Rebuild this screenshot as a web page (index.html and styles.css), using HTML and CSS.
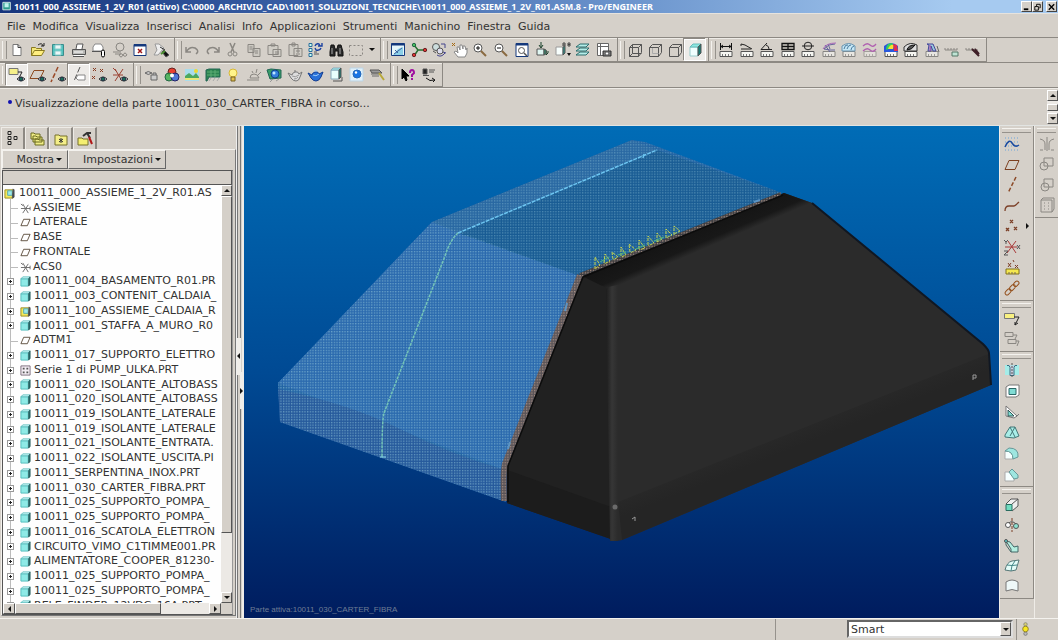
FILE: index.html
```html
<!DOCTYPE html>
<html lang="it">
<head>
<meta charset="utf-8">
<title>10011_000_ASSIEME_1_2V_R01 - Pro/ENGINEER</title>
<link rel="stylesheet" href="styles.css">
</head>
<body>
<svg class="defs" aria-hidden="true">
  <symbol id="part" viewBox="0 0 12 12"><path d="M1 3h8v8H1z" fill="#8eeae6" stroke="#5bb" /><path d="M1 3l2-2h8l-2 2z" fill="#dff" stroke="#5bb"/><path d="M9.500 3l1.500-2v8l-1.500 2z" fill="#166" stroke="#366"/></symbol>
  <symbol id="asm" viewBox="0 0 12 12"><path d="M1 2h9v9H1z" fill="#f4e95c" stroke="#998a20"/><path d="M4 3h5v5H4z" fill="#9fe9ea" stroke="#5aa"/><path d="M10 1l1 1v8l-2 1z" fill="#345"/></symbol>
  <symbol id="plane" viewBox="0 0 12 12"><path d="M4 2.500h7l-3 7H1z" stroke="#5a4a3a" fill="none"/></symbol>
  <symbol id="csys" viewBox="0 0 12 12"><path d="M1 6h10M3 1l6 10M9 2L3 11M1 1l2 2M11 4v4" stroke="#666" fill="none"/></symbol>
  <symbol id="series" viewBox="0 0 12 12"><path d="M1 1h10v10H1z" stroke="#7a6a78" fill="#f4eef4"/><path d="M3 4h2M7 4h2M3 8h2M7 8h2" stroke="#555" stroke-width="2"/></symbol>
  <symbol id="ruler" viewBox="0 0 20 20"><path d="M4 11.500h12v5H4z" fill="#f6f6f2" stroke="#555"/><path d="M6.500 14v2M9.500 14v2M12.500 14v2" stroke="#777"/></symbol>
  <symbol id="eye" viewBox="0 0 20 20"><path d="M10 14q4-4 8 0q-4 4-8 0z" fill="#dde" stroke="#333"/><circle cx="14" cy="14" r="1.800" fill="#187058" stroke="#234"/></symbol>
  <symbol id="cube" viewBox="0 0 20 20"><path d="M4.500 7.500h9v9h-9zM4.500 7.500l3-3h9l-3 3M16.500 4.500v8l-3 4"/></symbol>
</svg>

<header class="titlebar">
  <svg class="appicon" viewBox="0 0 12 12"><path d="M1 1h9v9H1z" fill="#2c9c8e" stroke="#e8f4f0"/><path d="M3 2h5v5H3z" fill="#bff3ee"/></svg>
  <h1>10011_000_ASSIEME_1_2V_R01 (attivo) C:\0000_ARCHIVIO_CAD\10011_SOLUZIONI_TECNICHE\10011_000_ASSIEME_1_2V_R01.ASM.8 - Pro/ENGINEER</h1>
  <div class="winbtns">
    <button aria-label="Riduci"><svg viewBox="0 0 10 8"><path d="M2 6.500h5" stroke="#000" stroke-width="2"/></svg></button>
    <button aria-label="Ripristina"><svg viewBox="0 0 10 8"><path d="M4 3V1h4v4H7M2 3.500h4v4H2z" stroke="#000"/></svg></button>
    <button class="close" aria-label="Chiudi"><svg viewBox="0 0 10 8"><path d="M2 1l6 6M8 1L2 7" stroke="#000" stroke-width="1.500"/></svg></button>
  </div>
</header>

<nav class="menubar">
  <button>File</button><button>Modifica</button><button>Visualizza</button><button>Inserisci</button><button>Analisi</button><button>Info</button><button>Applicazioni</button><button>Strumenti</button><button>Manichino</button><button>Finestra</button><button>Guida</button>
</nav>

<div class="toolbar">
  <div class="group g-file">
    <button aria-label="Nuovo"><svg viewBox="0 0 20 20"><path d="M6 4.500h5l3 3v8H6z" fill="#fff" stroke="#777"/><path d="M11 4.500v3h3" stroke="#444"/></svg></button>
    <button aria-label="Apri"><svg viewBox="0 0 20 20"><path d="M3.500 15.500v-8h4l1 1h5v2" fill="#f3e77a" stroke="#8a7a20"/><path d="M3.500 15.500l3-5h10l-3 5z" fill="#ffef80" stroke="#8a7a20"/><path d="M10 5q4-3 5 1M13 6h3V3" stroke="#222"/></svg></button>
    <button aria-label="Salva"><svg viewBox="0 0 20 20"><path d="M4.500 4.500h11v11h-11z" fill="#52c4be" stroke="#3a8c8c"/><path d="M7 5h6v4H7zM7 11h6v4H7z" fill="#eaf6f6" stroke="#8cc"/></svg></button>
    <button aria-label="Stampa"><svg viewBox="0 0 20 20"><path d="M7 9l1-5h6l-1 5" fill="#fff" stroke="#555"/><path d="M3.500 9.500h13v5h-13z" fill="#b9b9b6" stroke="#555"/><path d="M5 15.500h10M5 12h9" stroke="#fff"/><path d="M4 16.500h11" stroke="#555"/></svg></button>
    <button aria-label="Invia"><svg viewBox="0 0 20 20"><path d="M4 10V7l2-3h6l2 3v4H4z" fill="#fff" stroke="#888"/><path d="M3 11.500h9" stroke="#555"/><rect x="12.500" y="10" width="3" height="7" rx="1.500" fill="#fff" stroke="#000"/></svg></button>
    <button class="off" aria-label="Invia collegamento"><svg viewBox="0 0 20 20"><circle cx="10" cy="7" r="4"/><path d="M3 12h8M5 14h6M9 15q2-3 4 0t4 0q-2-4-4 0t-4 0"/></svg></button>
    <button aria-label="Chiudi finestra"><svg viewBox="0 0 20 20"><path d="M4 4.500h12v11H4z" fill="#fff" stroke="#14387c"/><path d="M4 5.500h12" stroke="#14387c" stroke-width="2"/><path d="M8 9l4 4M12 9l-4 4" stroke="#a01818" stroke-width="1.500"/></svg></button>
    <button aria-label="Elimina versioni"><svg viewBox="0 0 20 20"><path d="M4 4h4l5 4-6 7H3l3-5z" fill="#eee" stroke="#999"/><path d="M9 7l5 3" stroke="#333"/><path d="M11 12l2-2 5 5-3 2z" fill="#111"/><path d="M10 14l4-3" stroke="#4a8f30" stroke-width="2"/></svg></button>
  </div>
  <div class="group g-edit">
    <button class="off" aria-label="Annulla"><svg viewBox="0 0 20 20"><path d="M4 7v5h5M4.500 11.500Q8 6 13 8q5 3 1 6" stroke-width="1.500"/></svg></button>
    <button class="off" aria-label="Ripeti"><svg viewBox="0 0 20 20"><path d="M16 7v5h-5M15.500 11.500Q12 6 7 8q-5 3-1 6" stroke-width="1.500"/></svg></button>
    <button class="off" aria-label="Taglia"><svg viewBox="0 0 20 20"><path d="M7 3l4 9M12 3L8 12" stroke-width="1.500"/><circle cx="7" cy="14" r="2"/><circle cx="12" cy="14" r="2"/></svg></button>
    <button class="off" aria-label="Copia"><svg viewBox="0 0 20 20"><path d="M4 4.500h6v8H4zM9 8.500h7v8H9zM5.500 7h3M5.500 9h3M11 11h3M11 13h3" fill="#ccc9c2"/></svg></button>
    <button class="off" aria-label="Incolla"><svg viewBox="0 0 20 20"><path d="M4 5.500h10v9H4zM7 4h4v2H7zM9 9.500h8v7H9zM11 12h4M11 14h4" fill="#d0cdc6"/></svg></button>
    <button class="off" aria-label="Incolla speciale"><svg viewBox="0 0 20 20"><path d="M4 4.500h9v11H4zM7 3h3v3H7zM9 8.500h8v8H9zM11 11h4M11 14h1M14 14h1" fill="#d0cdc6"/></svg></button>
    <button aria-label="Rigenera"><svg viewBox="0 0 20 20"><path d="M4 3.500h3v3H4zM4 8.500h3v3H4zM4 13.500h3v3H4z" fill="#cfe" stroke="#2a6c9c"/><path d="M10 6q1-3 4-2l1 2m-2 0h4V3M16 8q-1 3-5 2l-1-2" stroke="#1a40a0" stroke-width="1.400"/><path d="M9 14h5M9 12h3" stroke="#555"/></svg></button>
    <button aria-label="Trova"><svg viewBox="0 0 20 20"><path d="M5 5h3l1 4h2l1-4h3l2 7v4h-5v-5H9v5H4v-4z" fill="#2a2a2a" stroke="#111"/><path d="M6 8v6M14 8v6" stroke="#aaa"/></svg></button>
    <button class="off" aria-label="Seleziona"><svg viewBox="0 0 20 20"><path d="M3.500 5.500h13v10h-13z" stroke-dasharray="2 2"/></svg></button>
    <button class="drop" aria-label="Opzioni di selezione"><i class="down"></i></button>
  </div>
  <div class="group g-view">
    <button aria-label="Ridisegna"><svg viewBox="0 0 20 20"><path d="M3.500 3.500h13v12h-13z" fill="#e6f6fa" stroke="#14387c"/><path d="M3.500 4.500h13" stroke="#14387c" stroke-width="2"/><path d="M10 9l5-2v8H5z" fill="#8cd0e8" stroke="none"/><path d="M6 14l8-6M7 10l3 3" stroke="#3c64a0"/></svg></button>
    <button aria-label="Centro di rotazione"><svg viewBox="0 0 20 20"><path d="M5 5l4 5-4 6M9 10h7" stroke="#267030" stroke-width="1.500"/><circle cx="5" cy="5" r="1.700" fill="#4cc060" stroke="#264"/><circle cx="5" cy="15" r="1.700" fill="#d33" stroke="#622"/><circle cx="16" cy="10" r="1.700" fill="#d33" stroke="#622"/></svg></button>
    <button aria-label="Modo orientamento"><svg viewBox="0 0 20 20"><circle cx="7" cy="7" r="3.500" fill="#cdd"/><circle cx="11" cy="11" r="3" fill="#dde"/><path d="M12 4h4v4M8 15q4 3 8-2M14 12l3 1" stroke="#44448c"/><path d="M4 11l3 2" stroke="#555"/></svg></button>
    <button aria-label="Trascina"><svg viewBox="0 0 20 20"><path d="M8 17l-4-5 2-1 2 2-1-6h2l1 3V5h2l1 4V6h2l1 4 1-2v5l-2 4z" fill="#fff" stroke="#888"/><path d="M2 3l3 3M5 3L2 6" stroke="#a76a10"/></svg></button>
    <button aria-label="Ingrandisci"><svg viewBox="0 0 20 20"><circle cx="8" cy="8" r="4" fill="#fff"/><path d="M6 8h4M8 6v4" stroke="#111"/><path d="M11 11l5 5" stroke="#8a6a40" stroke-width="2"/></svg></button>
    <button aria-label="Riduci vista"><svg viewBox="0 0 20 20"><circle cx="8" cy="8" r="4" fill="#fff"/><path d="M6 8h4" stroke="#111"/><path d="M11 11l5 5" stroke="#8a6a40" stroke-width="2"/></svg></button>
    <button aria-label="Adatta"><svg viewBox="0 0 20 20"><path d="M4 3.500h12v13H4z" fill="#fff" stroke="#14387c"/><path d="M4 4.500h12" stroke="#14387c" stroke-width="2"/><circle cx="9.500" cy="10.500" r="3"/><path d="M12 13l3 3" stroke-width="1.500"/></svg></button>
    <button aria-label="Riorienta"><svg viewBox="0 0 20 20"><path d="M5 9h7v6H5z" fill="#dff6f2"/><path d="M9 2v5M7 5l2 3 2-3M13 12h4M14 10v4M14 15l2-2" stroke="#173e28"/><path d="M12 9l2 1v4l-2 1z" fill="#2b8b6a"/></svg></button>
    <button aria-label="Viste salvate"><svg viewBox="0 0 20 20"><path d="M3 7h7v8H3z" fill="#f8fffd" stroke="#999"/><path d="M10 7l2-1v7l-2 2z" fill="#2a8f86"/><path d="M10 6V3h2v3M10 5h2M15 3v3h2V3zM15 4.500h2" stroke="#444"/><path d="M14 13h4l-2 3z" fill="#111" stroke="none"/></svg></button>
    <button aria-label="Livelli"><svg viewBox="0 0 20 20"><path d="M3 7l4-3h9l-3 3zM3 11l4-3h9l-3 3zM3 15l4-3h9l-3 3z" fill="#b5ece8" stroke="#2c6c6c"/></svg></button>
    <button aria-label="Gestione viste"><svg viewBox="0 0 20 20"><path d="M3.500 3.500h11v12h-11zM3.500 6.500h11M6.500 3.500v12" fill="#fff" stroke="#666"/><path d="M9 11h8v5H9z" fill="#777" stroke="#333"/><circle cx="13" cy="13.500" r="1.700" fill="#fff"/></svg></button>
  </div>
  <div class="group g-disp">
    <button aria-label="Wireframe"><svg viewBox="0 0 20 20"><use href="#cube"/><path d="M7.500 4.500v9h9M7.500 13.500l-3 3"/></svg></button>
    <button aria-label="Linee nascoste"><svg viewBox="0 0 20 20"><use href="#cube"/><path d="M7.500 8v5.500h6" stroke="#aaa"/></svg></button>
    <button aria-label="Nessuna linea nascosta"><svg viewBox="0 0 20 20"><use href="#cube"/></svg></button>
    <button class="on" aria-label="Ombreggiato" aria-pressed="true"><svg viewBox="0 0 20 20"><path d="M5 7h8v9H5z" fill="#f0fffe" stroke="#9cc"/><path d="M5 7l3-3h8l-3 3z" fill="#8ce8e0" stroke="#6bb"/><path d="M13 7l3-3v9l-3 3z" fill="#187c74"/></svg></button>
  </div>
  <div class="group g-meas">
    <button aria-label="Distanza"><svg viewBox="0 0 20 20"><use href="#ruler"/><path d="M4.500 3v7M15.500 3v7M5 6.500h10M7 5L5 6.500 7 8M13 5l2 1.500L13 8" stroke="#111"/></svg></button>
    <button aria-label="Lunghezza"><svg viewBox="0 0 20 20"><use href="#ruler"/><path d="M4 4l4 1 7 4M4 9h10M4 4v2" stroke="#222"/></svg></button>
    <button aria-label="Angolo"><svg viewBox="0 0 20 20"><use href="#ruler"/><path d="M10 3L4 9.500h11M9 5q3 1 3 4" stroke="#222"/></svg></button>
    <button aria-label="Area"><svg viewBox="0 0 20 20"><use href="#ruler"/><path d="M4 3.500h12v6H4zM10 3v7M4 6.500h12" stroke="#111" stroke-width="1.300"/></svg></button>
    <button aria-label="Diametro"><svg viewBox="0 0 20 20"><use href="#ruler"/><circle cx="10" cy="6" r="3.800" stroke="#222"/><path d="M4 6h12" stroke="#222"/></svg></button>
    <button aria-label="Curvatura"><svg viewBox="0 0 20 20"><use href="#ruler" opacity=".6"/><path d="M16 4l-6 1-5 4 6 1 5 0M6 5l5 7M9 4l2 5" stroke="#64649c"/><path d="M4 9q3-6 13-6" stroke="#a864b8"/></svg></button>
    <button aria-label="Sezioni"><svg viewBox="0 0 20 20"><use href="#ruler" opacity=".6"/><path d="M3 11V6q7-5 13 0v5z" fill="#c6e6f4" stroke="#6a94b0"/><path d="M5 9q1-5 4-4M8 9q1-4 4-4M12 10q0-3 3-4" stroke="#4a7ca0"/></svg></button>
    <button aria-label="Offset"><svg viewBox="0 0 20 20"><use href="#ruler" opacity=".4"/><path d="M3 6q4-4 7-1t6-1M3 11q4-4 7-1t6-1" stroke="#b060b0" stroke-width="1.300"/></svg></button>
    <button aria-label="Curvatura ombreggiata"><svg viewBox="0 0 20 20"><use href="#ruler"/><g stroke="none"><path d="M3 12V6q7-6 14 0v6z" fill="#2a58dc"/><path d="M5 10q0-7 6-7l2 4z" fill="#30d060"/><path d="M7 9q2-5 6-4l-1 4z" fill="#f6e030"/><path d="M12 4l4 1 1 6h-4z" fill="#e03050"/></g></svg></button>
    <button aria-label="Riflessione"><svg viewBox="0 0 20 20"><use href="#ruler"/><path d="M3 11V7q6-6 13-2v6z" fill="#ddd" stroke="#333"/><path d="M6 10q1-5 8-5-3 5-8 5z" fill="#555" stroke="#111"/></svg></button>
    <button aria-label="Sformo"><svg viewBox="0 0 20 20"><use href="#ruler" opacity=".6"/><path d="M5 4h6l3 7h-3l-2-5v5H6l1-6z" fill="#9cd" stroke="#449"/><path d="M8 5v6" stroke="#b4a"/><path d="M15 6l2 6" stroke="#666"/></svg></button>
    <button class="off" aria-label="Nascondi analisi"><svg viewBox="0 0 20 20"><path d="M3 10h12M3 8v2M6 8v2M9 8v2M12 8v2M15 8v2"/><path d="M10 12h6v4h-6z" fill="#bfe4d4" stroke="#576"/></svg></button>
    <button class="off" aria-label="Elimina analisi"><svg viewBox="0 0 20 20"><path d="M3 10h12M3 8v2M6 8v2M9 8v2M12 8v2"/><path d="M9 9l7 7M12 9l4 5" stroke="#402028" stroke-width="2"/></svg></button>
  </div>
</div>

<div class="toolbar">
  <div class="group g-datum">
    <button class="on" aria-label="Annotazioni"><svg viewBox="0 0 20 20"><path d="M2 3.500h9v6H2z" fill="#f6f08a" stroke="#777"/><path d="M11 7h4l-3 6" stroke="#222"/><use href="#eye"/></svg></button>
    <button aria-label="Piani di riferimento"><svg viewBox="0 0 20 20"><path d="M6 5.500h10l-4 8H2z" stroke="#8c4a20"/><use href="#eye"/></svg></button>
    <button aria-label="Assi di riferimento"><svg viewBox="0 0 20 20"><path d="M10 2L3 17" stroke="#9a4a28" stroke-dasharray="5 2" stroke-width="1.500"/><use href="#eye"/></svg></button>
    <button class="on" aria-label="Tag assi"><svg viewBox="0 0 20 20"><path d="M11 2L5 16" stroke="#555" stroke-dasharray="6 2"/><path d="M9 10h7v5H9l-2-2z" fill="#fff" stroke="#888"/></svg></button>
    <button aria-label="Punti di riferimento"><svg viewBox="0 0 20 20"><path d="M4 3l3 3M7 3L4 6M11 4l3 3M14 4l-3 3M3 11l3 3M6 11l-3 3" stroke="#883c20"/><use href="#eye"/></svg></button>
    <button aria-label="Sistemi di coordinate"><svg viewBox="0 0 20 20"><path d="M3 10h10M5 4l7 12M13 4L5 16M3 3l3 3" stroke="#9a4030"/><use href="#eye"/></svg></button>
  </div>
  <div class="group g-render">
    <button class="off" aria-label="Vista precedente"><svg viewBox="0 0 20 20"><path d="M4 8q3-3 7 0-4 3-7 0M10 10h6v5h-6zM12 10V8h3v2" fill="#ccc" stroke="#666"/></svg></button>
    <button aria-label="Colori e aspetto"><svg viewBox="0 0 20 20"><circle cx="10" cy="7" r="4" fill="#e84030" stroke="#622"/><circle cx="7" cy="12" r="4" fill="#40b050" fill-opacity=".85" stroke="#264"/><circle cx="13" cy="12" r="4" fill="#3868d8" fill-opacity=".85" stroke="#226"/><circle cx="10" cy="10.500" r="2" fill="#fff" stroke="none"/></svg></button>
    <button aria-label="Scena"><svg viewBox="0 0 20 20"><g stroke="none"><path d="M3 4h14v12H3z" fill="#a8dcec"/><path d="M3 11l4-3 4 3 3-3 3 4v2H3z" fill="#4ca860"/><circle cx="14" cy="6" r="2" fill="#f0d830"/></g><path d="M3 14h14" stroke="#e8e878" stroke-width="2"/></svg></button>
    <button aria-label="Stanza"><svg viewBox="0 0 20 20"><path d="M3 5l3-1h11v8H6l-2 4H3z" fill="#2c8450" stroke="#265"/><path d="M4 7h12M4 10h12M8 5v7M12 5v7" stroke="#5cac74"/><path d="M6 16l2-3M10 16l2-3M14 16l2-3" stroke="#aaa"/></svg></button>
    <button aria-label="Luci"><svg viewBox="0 0 20 20"><circle cx="10" cy="8" r="4" fill="#fff48a" stroke="#d8b838"/><path d="M8 12h4v4H8z" fill="#e0c050" stroke="#776020"/></svg></button>
    <button class="off" aria-label="Effetti"><svg viewBox="0 0 20 20"><path d="M3 15h12M6 13q0-4 4-4t5 4zM8 6l1 2M13 4l-1 4M17 7l-3 3" /></svg></button>
    <button aria-label="Prospettiva"><svg viewBox="0 0 20 20"><path d="M3 5l4-1 10 1v8L6 14z" fill="#389c68" stroke="#265"/><circle cx="11" cy="9" r="4" fill="#3480dc" stroke="#148"/><circle cx="10" cy="8" r="1.500" fill="#bfe6ff" stroke="none"/><path d="M6 17l3-3M12 16l3-2" stroke="#999"/></svg></button>
    <button class="off" aria-label="Rendering area"><svg viewBox="0 0 20 20"><path d="M3 8l4 2q0-2 3-3t4 2l3-2-2 5q-1 4-4 4t-5-3zM10 5v2" fill="#ddd" stroke="#777"/><path d="M7 11q3 2 7-1M9 14q3 0 4-2" stroke="#999"/></svg></button>
    <button aria-label="Rendering"><svg viewBox="0 0 20 20"><path d="M3 8l4 2q0-2 3-3t4 2l4-2-2 5q-2 4-5 4t-5-3z" fill="#2870d8" stroke="#123c90"/><path d="M8 10q3 2 6-1M9 6h3" stroke="#9ccaf8"/></svg></button>
    <button aria-label="Ombre"><svg viewBox="0 0 20 20"><path d="M5 5h8v9H5z" fill="#e8fffd" stroke="#8ab"/><path d="M5 5l2-2h8l-2 2z" fill="#9ee" stroke="#8ab"/><path d="M13 5l2-2v9l-2 2z" fill="#187c74"/><path d="M7 16h9v-4" stroke="#555"/></svg></button>
    <button aria-label="Sfera"><svg viewBox="0 0 20 20"><path d="M4 3h13v13H4z" fill="#dff0fa" stroke="#bcd4e4"/><circle cx="11" cy="9" r="4" fill="#1874e4" stroke="#2468b8"/><circle cx="10" cy="7.500" r="1.200" fill="#fff" stroke="none"/></svg></button>
    <button aria-label="Strumento"><svg viewBox="0 0 20 20"><path d="M3 5h9l3 3H5z" fill="#999" stroke="#555"/><path d="M4 9h8M5 11h7" stroke="#666"/><path d="M12 8l5 7" stroke="#b8a838" stroke-width="2"/></svg></button>
  </div>
  <div class="group g-help">
    <button aria-label="Guida contestuale"><svg viewBox="0 0 20 20"><path d="M4 4v10l2-2 2 4 1-1-1-4h3z" fill="#000" stroke="#000"/><path d="M12 8q0-3 2-3t2 3l-2 2v2M14 13v2" stroke="#a010a0" stroke-width="2"/></svg></button>
    <button aria-label="Informazioni"><svg viewBox="0 0 20 20"><path d="M4 4h4v5H4z" fill="#222"/><path d="M10 5h6M10 7h5M4 10.500h6" stroke="#555"/><path d="M7 13q4 4 8 2M13 13l3 2-2 2" stroke="#111"/></svg></button>
  </div>
</div>

<section class="message">
  <p>Visualizzazione della parte 10011_030_CARTER_FIBRA in corso...</p>
  <div class="vscroll mini"><button aria-label="Su"><i class="up"></i></button><span class="thumb"></span><button aria-label="Giù"><i class="down"></i></button></div>
</section>

<main class="work">
  <aside class="side">
    <div class="tabs">
      <button class="current" aria-label="Albero modello"><svg viewBox="0 0 20 20"><path d="M5 2.500h3v3H5zM5 7.500h3v3H5zM5 12.500h3v3H5zM11 7.500h3v3h-3z" stroke="#222"/></svg></button>
      <button aria-label="Cartelle"><svg viewBox="0 0 20 20"><path d="M4 4h3l1 1h5v5H4zM6 7h3l1 1h5v5H6zM8 10h3l1 1h5v5H8z" fill="#f0ec86" stroke="#6a6a20"/></svg></button>
      <button aria-label="Preferiti"><svg viewBox="0 0 20 20"><path d="M4 6h4l1 1h7v9H4z" fill="#f4ee88" stroke="#77702a"/><path d="M10 9v5M8 10l4 3M12 10l-4 3" stroke="#333"/></svg></button>
      <button aria-label="Connessioni"><svg viewBox="0 0 20 20"><path d="M3 9h4l1 1h5v6H3z" fill="#f4ee70" stroke="#77702a"/><path d="M8 7l4-3h4M12 4l3 5" stroke="#333" stroke-width="2"/><path d="M14 8l3 7" stroke="#b01818" stroke-width="2"/></svg></button>
    </div>
    <div class="panel">
      <div class="options"><button>Mostra<i class="down"></i></button><button class="wide">Impostazioni<i class="down"></i></button></div>
      <div class="treebox">
        <div class="colhead"></div>
        <div class="treeview">
          <ul class="tree">
            <li class="root"><svg><use href="#asm"/></svg>10011_000_ASSIEME_1_2V_R01.AS</li>
            <li class="leaf"><svg><use href="#csys"/></svg>ASSIEME</li>
            <li class="leaf"><svg><use href="#plane"/></svg>LATERALE</li>
            <li class="leaf"><svg><use href="#plane"/></svg>BASE</li>
            <li class="leaf"><svg><use href="#plane"/></svg>FRONTALE</li>
            <li class="leaf"><svg><use href="#csys"/></svg>ACS0</li>
            <li><b></b><svg><use href="#part"/></svg>10011_004_BASAMENTO_R01.PR</li>
            <li><b></b><svg><use href="#part"/></svg>10011_003_CONTENIT_CALDAIA_</li>
            <li><b></b><svg><use href="#asm"/></svg>10011_100_ASSIEME_CALDAIA_R</li>
            <li><b></b><svg><use href="#part"/></svg>10011_001_STAFFA_A_MURO_R0</li>
            <li class="leaf"><svg><use href="#plane"/></svg>ADTM1</li>
            <li><b></b><svg><use href="#part"/></svg>10011_017_SUPPORTO_ELETTRO</li>
            <li><b></b><svg><use href="#series"/></svg>Serie 1 di PUMP_ULKA.PRT</li>
            <li><b></b><svg><use href="#part"/></svg>10011_020_ISOLANTE_ALTOBASS</li>
            <li><b></b><svg><use href="#part"/></svg>10011_020_ISOLANTE_ALTOBASS</li>
            <li><b></b><svg><use href="#part"/></svg>10011_019_ISOLANTE_LATERALE</li>
            <li><b></b><svg><use href="#part"/></svg>10011_019_ISOLANTE_LATERALE</li>
            <li><b></b><svg><use href="#part"/></svg>10011_021_ISOLANTE_ENTRATA.</li>
            <li><b></b><svg><use href="#part"/></svg>10011_022_ISOLANTE_USCITA.PI</li>
            <li><b></b><svg><use href="#part"/></svg>10011_SERPENTINA_INOX.PRT</li>
            <li><b></b><svg><use href="#part"/></svg>10011_030_CARTER_FIBRA.PRT</li>
            <li><b></b><svg><use href="#part"/></svg>10011_025_SUPPORTO_POMPA_</li>
            <li><b></b><svg><use href="#part"/></svg>10011_025_SUPPORTO_POMPA_</li>
            <li><b></b><svg><use href="#part"/></svg>10011_016_SCATOLA_ELETTRON</li>
            <li><b></b><svg><use href="#part"/></svg>CIRCUITO_VIMO_C1TIMME001.PR</li>
            <li><b></b><svg><use href="#part"/></svg>ALIMENTATORE_COOPER_81230-</li>
            <li><b></b><svg><use href="#part"/></svg>10011_025_SUPPORTO_POMPA_</li>
            <li><b></b><svg><use href="#part"/></svg>10011_025_SUPPORTO_POMPA_</li>
            <li><b></b><svg><use href="#part"/></svg>RELE_FINDER_12VDC_16A.PRT</li>
          </ul>
          <div class="vscroll"><button aria-label="Su"><i class="up"></i></button><span class="thumb"></span><button aria-label="Giù"><i class="down"></i></button></div>
        </div>
        <div class="hscroll"><button aria-label="Sinistra"><i class="left"></i></button><span class="thumb"></span><button aria-label="Destra"><i class="right"></i></button></div>
      </div>
    </div>
  </aside>

  <div class="splitter"><button class="fold" aria-label="Comprimi"><i class="left"></i></button><button class="unfold" aria-label="Espandi"><i class="right"></i></button></div>

  <section class="viewport">
    <svg viewBox="244 126 755 492" preserveAspectRatio="xMidYMid slice" role="img" aria-label="Modello 3D del carter">
      <defs>
        <pattern id="dots" width="2.670" height="2.670" patternUnits="userSpaceOnUse"><rect width="1.300" height="1.300" fill="#90c4d8"/></pattern>
        <pattern id="rimdots" width="2.670" height="2.670" patternUnits="userSpaceOnUse"><rect width="1.300" height="1.300" fill="#b89c8c"/></pattern>
        <linearGradient id="band" x1="0" y1="0" x2="1" y2="0"><stop offset="0" stop-color="#1d1d1d"/><stop offset=".5" stop-color="#363636"/><stop offset="1" stop-color="#2b2b2b"/></linearGradient>
        <linearGradient id="fillet" gradientUnits="userSpaceOnUse" x1="690" y1="230" x2="699" y2="251"><stop offset="0" stop-color="#141414"/><stop offset=".7" stop-color="#181818"/><stop offset="1" stop-color="#2b2b2b"/></linearGradient>
        <linearGradient id="base" gradientUnits="userSpaceOnUse" x1="790" y1="415" x2="802" y2="445"><stop offset="0" stop-color="#2b2b2b"/><stop offset="1" stop-color="#252525"/></linearGradient>
      </defs>
      <path d="M432 222L632 140 645 142 782 193 577 275 505 470 506 502 280 422 278 383z" fill="#2264a4"/>
      <path d="M432 222L577 275 505 470 278 383z" fill="#2b6aae"/>
      <path d="M432 222L632 140 657 150 458 233z" fill="#2968a2"/>
      <path d="M458 233L657 150 782 193 577 275z" fill="#195c94"/>
      <path d="M278 389Q350 404 400 429T505 470L506 502 280 422z" fill="#265a9c"/>
      <path d="M432 222L632 140 645 142 782 193 577 275 458 233z" fill="url(#dots)" opacity=".45"/>
      <path d="M432 222L577 275 505 470 506 502 280 422 278 383z" fill="url(#dots)" opacity=".62"/>
      <path d="M458 233L657 150M643 158l1-4" fill="none" stroke="#6cc4f0" stroke-width="1.500" stroke-dasharray="4 1"/>
      <path d="M458 233Q450 240 445 256L384 413Q382 420 382 457" fill="none" stroke="#74c4b8" stroke-width="1.500" stroke-dasharray="3 1"/>
      <path d="M380 457h6" stroke="#8cdcec" fill="none"/>
      <path d="M784 193L812 203 983 344Q989 350 989 353L991 385 622 540Q616 542 608 538L507 503 507 467 582 276z" fill="#2b2b2b"/>
      <path d="M582 276L609 285 611 539 507 503 507 467z" fill="#212121"/>
      <path d="M507 470L611 507V539L507 503z" fill="#1c1c1c"/>
      <path d="M582 276L784 193 812 203 612 290 600 285z" fill="url(#fillet)"/>
      <path d="M606 290Q608 286 618 285V541H610z" fill="url(#band)"/>
      <path d="M618 502L988 354 991 385 622 540z" fill="url(#base)"/>
      <path d="M812 203L983 344Q989 350 989 353L991 385" fill="none" stroke="#101722" stroke-width="2"/>
      <path d="M781 194L580 275" fill="none" stroke="#3c3c40" stroke-width="4"/>
      <path d="M580 275L505 464Q503 470 504 501" fill="none" stroke="#5a5458" stroke-width="6"/>
      <path d="M781 194L580 275" fill="none" stroke="url(#rimdots)" stroke-width="3"/>
      <path d="M580 275L505 464Q503 470 504 501" fill="none" stroke="url(#rimdots)" stroke-width="6" opacity=".8"/>
      <path d="M783 195L583 277 508 466V502" fill="none" stroke="#0c0c0c" stroke-width="1.500"/>
      <path d="M595 269v-12l5 8-5 4M604 263l1-9 5 7-6 3M613 259l-1-7 6 5-5 3M621 256v-9l5 8-5 2M630 252l-1-8 7 6-6 3M639 249v-9l6 8-6 2M648 245v-9l6 7-6 3M657 242v-9l5 6-5 3M666 238v-9l6 6-6 3M674 235v-9l6 5-6 3" fill="none" stroke="#c4d450" stroke-dasharray="3 1"/>
      <path d="M600 262l9-5M618 255l8-3M636 249l9-4M654 241l10-4" stroke="#50b47c" fill="none"/>
      <circle cx="615" cy="507" r="2.500" fill="#6a6a6a"/>
      <path d="M632 519l3-2v4M973 380v-5h3v3h-3" stroke="#999" fill="none"/>
      <path d="M754 202l6-2M565 311l2-8M508 449l2-7" stroke="#5c94c4" stroke-width="2" fill="none"/>
    </svg>
    <p>Parte attiva:10011_030_CARTER_FIBRA</p>
  </section>

  <div class="rail">
    <div class="vgroup v-datum">
      <button aria-label="Schizzo"><svg viewBox="0 0 20 20"><path d="M3 4h14M3 8h14M3 12h14M3 16h14" stroke="#6aa4dc" stroke-dasharray="1 2"/><path d="M3 13q4-9 7-4t7 2" stroke="#1c4ca0" stroke-width="1.500"/></svg></button>
      <button aria-label="Piano"><svg viewBox="0 0 20 20"><path d="M7 5.500h10l-4 9H3z" stroke="#7c4020"/></svg></button>
      <button aria-label="Asse"><svg viewBox="0 0 20 20"><path d="M14 2L6 18" stroke="#8c4a28" stroke-width="1.500" stroke-dasharray="4 2"/></svg></button>
      <button aria-label="Curva"><svg viewBox="0 0 20 20"><path d="M3 15q0-5 4-5t5 0 5-4" stroke="#7c4028" stroke-width="1.300"/></svg></button>
      <button aria-label="Punto"><svg viewBox="0 0 20 20"><path d="M8 4l3 3M11 4L8 7M4 12l3 3M7 12l-3 3M12 11l3 3M15 11l-3 3" stroke="#7c4028" stroke-width="1.300"/></svg><i class="right"></i></button>
      <button aria-label="Sistema di coordinate"><svg viewBox="0 0 20 20"><path d="M3 10h12M6 4l8 12M14 4L5 16" stroke="#a83838"/><path d="M2 3l2 2 2-2M4 5v2M2 14h4l-4 4h4M15 8l3 4M18 8l-3 4" stroke="#555"/></svg></button>
      <button aria-label="Analisi"><svg viewBox="0 0 20 20"><path d="M4 12h13v5H4z" fill="#f4e850" stroke="#80701c"/><path d="M6 6l3 4M9 6l-3 4M11 3l1 2M13 8l3 3M16 8l-3 3" stroke="#7c4028"/><path d="M7 15v2M10 15v2M13 15v2" stroke="#765"/></svg></button>
      <button aria-label="Riferimento"><svg viewBox="0 0 20 20"><g transform="rotate(-45 10 10)" stroke="#94501c"><rect x="1" y="8" width="7" height="4" rx="2"/><rect x="7" y="8" width="7" height="4" rx="2"/><rect x="13" y="8" width="6" height="4" rx="2"/></g></svg></button>
    </div>
    <div class="vgroup v-note">
      <button aria-label="Nota"><svg viewBox="0 0 20 20"><path d="M2.500 4.500h10v5h-10z" fill="#f8f080" stroke="#777"/><path d="M12 8h5l-4 8v-3m0 3l3-2" stroke="#222"/></svg></button>
      <button class="off" aria-label="Propaga nota"><svg viewBox="0 0 20 20"><path d="M3 3.500h8v4H3zM6 10.500h8v4H6zM11 6h4l-2 4M14 12h3l-2 5"/></svg></button>
    </div>
    <div class="vgroup v-feat">
      <button aria-label="Foro"><svg viewBox="0 0 20 20"><path d="M3 5h14v10H3z" fill="#a4ece8" stroke="none"/><path d="M5 5.500h2l1 2v8h4v-8l1-2h2" fill="#c8d0e0" stroke="#3c6c80"/><path d="M10 3v14" stroke="#555" stroke-dasharray="2 1"/></svg></button>
      <button aria-label="Guscio"><svg viewBox="0 0 20 20"><path d="M4 6l3-2h10v10l-3 2H4z" fill="#fff" stroke="#777"/><path d="M7 7.500h7v6H7z" fill="#80dcd4" stroke="#2c6868"/></svg></button>
      <button aria-label="Nervatura"><svg viewBox="0 0 20 20"><path d="M4 4l11 10-3 2-8-2z" fill="#fff" stroke="#777"/><path d="M6 8l6 6H6z" fill="#7cdcd0" stroke="#355"/><path d="M14 15l3-3" stroke="#777"/></svg></button>
      <button aria-label="Sformo"><svg viewBox="0 0 20 20"><path d="M3 13l5-8h5l4 9-5 2-9-1z" fill="#a8eee8" stroke="#477"/><path d="M8 5l5 10M13 5l-5 9" stroke="#477"/></svg></button>
      <button aria-label="Raccordo"><svg viewBox="0 0 20 20"><path d="M3 8q8-1 8 8H3z" fill="#f6ffff" stroke="#aaa"/><path d="M3 8l4-3q10 0 9 9l-5 2q0-8-8-8z" fill="#9ee6e0" stroke="#699"/></svg></button>
      <button aria-label="Smusso"><svg viewBox="0 0 20 20"><path d="M3 8h4l5 5v4H3z" fill="#f6ffff" stroke="#aaa"/><path d="M7 8l3-3 6 6v3l-4 1z" fill="#9ee6e0" stroke="#699"/></svg></button>
    </div>
    <div class="vgroup v-shape">
      <button aria-label="Estrusione"><svg viewBox="0 0 20 20"><path d="M4 9l5-5h7v7l-6 5" fill="#eee"/><path d="M4 9.500h6v6H4z" fill="#72dcc0" stroke="#286c60"/><path d="M10 9l6-5"/></svg></button>
      <button aria-label="Rivoluzione"><svg viewBox="0 0 20 20"><path d="M10 3v14" stroke="#7c4028" stroke-dasharray="3 1"/><circle cx="6" cy="10" r="2.500" fill="#fff"/><circle cx="14" cy="11" r="2.500" fill="#8ce0d0"/><path d="M7 8q3-3 7 1"/></svg></button>
      <button aria-label="Sweep"><svg viewBox="0 0 20 20"><path d="M4 5l4 1 4 5 4-1v6H9V13z" fill="#b4eee0" stroke="#466"/><path d="M4 5v4l5 7" stroke="#466"/><circle cx="4" cy="5" r="1.500" fill="#5cc" /></svg></button>
      <button aria-label="Unione contorni"><svg viewBox="0 0 20 20"><path d="M3 14q2-8 7-9l7-1-3 10-5 1z" fill="#e4fcf8" stroke="#577"/><path d="M9 15q0-6 4-10M5 9q5 1 10 0" stroke="#488"/></svg></button>
      <button aria-label="Superficie"><svg viewBox="0 0 20 20"><path d="M4 6q6-4 12 0v9q-6-3-12 0z" fill="#eef8f8" stroke="#777"/></svg></button>
    </div>
  </div>

  <div class="rail narrow">
    <div class="vgroup v-edit">
      <button class="off" aria-label="Specchia"><svg viewBox="0 0 20 20"><path d="M10 3v14M3 5q5 1 5 5v6M17 5q-5 1-5 5v6M3 16h3M14 16h3"/></svg></button>
      <button class="off" aria-label="Unisci"><svg viewBox="0 0 20 20"><path d="M7 4h9v8H7z"/><circle cx="7" cy="12" r="4"/></svg></button>
      <button class="off" aria-label="Interseca"><svg viewBox="0 0 20 20"><path d="M7 4h9v8H7z"/><circle cx="8" cy="12" r="4"/></svg></button>
      <button class="off" aria-label="Serie"><svg viewBox="0 0 20 20"><path d="M4 5l2-2h11v11l-2 3H4zM4 5h11v12M7 8h1M11 8h1M7 11h1M11 11h1M7 14h1M11 14h1"/></svg></button>
    </div>
  </div>
</main>

<footer class="status">
  <div class="gap"></div>
  <div class="filter"><select aria-label="Filtro di selezione"><option>Smart</option></select><span class="arrow"><i class="down"></i></span></div>
  <div class="lamp"><svg viewBox="0 0 20 20"><circle cx="10" cy="4.500" r="2" fill="#d8d070" stroke="#887"/><circle cx="10" cy="15.500" r="2" fill="#bbb" stroke="#777"/><circle cx="10" cy="10" r="3.300" fill="#f8e820" stroke="#887820"/></svg></div>
</footer>
</body>
</html>
```
FILE: styles.css
```css
* { box-sizing: border-box; }

body {
  margin: 0;
  height: 100vh;
  display: flex;
  flex-direction: column;
  overflow: hidden;
  background: #d5d0c9;
  color: #333;
  font: 11px "DejaVu Sans", Verdana, sans-serif;
}

button { font: inherit; color: inherit; padding: 0; border: 0; background: none; }
p, h1, ul { margin: 0; padding: 0; }
svg { display: block; fill: none; stroke: #555; }
symbol, use { stroke: inherit; }
.defs { position: absolute; width: 0; height: 0; }

/* small arrows */
i { display: inline-block; width: 0; height: 0; border: 3px solid transparent; }
i.down { border-top-color: #111; border-bottom-width: 0; }
i.up { border-bottom-color: #111; border-top-width: 0; }
i.left { border-right-color: #111; border-left-width: 0; }
i.right { border-left-color: #111; border-right-width: 0; }

/* title bar */
.titlebar {
  flex: none;
  height: 14px;
  display: flex;
  align-items: center;
  gap: 2px;
  padding: 0 1px 0 2px;
  border-bottom: 1px solid #e6e3de;
  background: linear-gradient(90deg, #16357c, #3b62a8 30%, #7099d0 62%, #a6caf0 90%);
}
.titlebar h1 {
  flex: 1;
  color: #fff;
  font: bold 9px "Noto Sans", Tahoma, sans-serif;
  line-height: 12px;
  white-space: nowrap;
}
.titlebar svg { stroke: none; }
.appicon { width: 10px; height: 11px; }
.winbtns { display: flex; }
.winbtns button {
  width: 11px;
  height: 11px;
  background: #d5d0c9;
  border: 1px solid;
  border-color: #fff #444 #444 #fff;
}
.winbtns .close { margin-left: 3px; }
.winbtns svg { width: 9px; height: 8px; }

/* menu */
.menubar {
  flex: none;
  height: 23px;
  display: flex;
  align-items: center;
  gap: 7px;
  padding: 1px 7px 0;
}

/* toolbars */
.toolbar {
  flex: none;
  display: flex;
  height: 25px;
  border-top: 1px solid #8d8983;
}
.group {
  display: flex;
  align-items: center;
  justify-content: space-between;
  padding: 0 3px 0 7px;
  border-right: 1px solid #8d8983;
  border-bottom: 1px solid #8d8983;
  box-shadow: inset 0 1px #eeebe6;
  position: relative;
}
.group::before {
  content: "";
  position: absolute;
  left: 2px;
  top: 3px;
  bottom: 2px;
  width: 3px;
  border: solid #f4f2ee;
  border-width: 0 0 0 1px;
  border-right: 1px solid #96928c;
}
.group button, .vgroup button { width: 20px; height: 20px; flex: none; position: relative; }
.group svg, .vgroup svg, .tabs svg { width: 20px; height: 20px; }
.group .drop { width: 10px; display: flex; align-items: center; justify-content: center; }
.group .on {
  background: #edebe8;
  box-shadow: 0 0 0 1px #fff, -1px -1px 0 1px #8d8983;
}
.off svg { stroke: #8a8782; }
.g-file { width: 175px; }
.g-edit { width: 206px; }
.g-view { width: 237px; }
.g-disp { width: 91px; }
.g-meas { width: 278px; }
.g-datum { width: 134px; }
.g-render { width: 257px; }
.g-help { width: 52px; }

/* message area */
.message {
  flex: none;
  height: 39px;
  display: flex;
  justify-content: space-between;
  border-top: 1px solid #8d8983;
  border-bottom: 1px solid #e2e4e2;
  box-shadow: inset 0 1px #eeebe6;
  padding: 2px 0 1px 8px;
}
.message p { padding-top: 7px; line-height: 14px; }
.message p::before { content: ""; display: inline-block; width: 4px; height: 4px; border-radius: 2px; background: #1010b0; margin: 0 3px 3px 0; }

/* scroll bars */
.vscroll { width: 11px; flex: none; display: flex; flex-direction: column; background: #ece9e5; }
.hscroll { height: 11px; flex: none; display: flex; background: #ece9e5; margin-right: 11px; }
.vscroll button, .hscroll button, .thumb {
  background: #d5d0c9;
  border: 1px solid;
  border-color: #fff #555 #555 #fff;
  display: flex;
  align-items: center;
  justify-content: center;
}
.vscroll button { height: 11px; flex: none; }
.hscroll button { width: 12px; flex: none; }
.vscroll .thumb { flex: 85; }
.vscroll::after { order: 1; content: ""; flex: 15; }
.vscroll button:last-child { order: 2; }
.hscroll .thumb { flex: 75; }
.hscroll::after { order: 1; content: ""; flex: 25; }
.hscroll button:last-child { order: 2; }
.mini .thumb { flex: 3; margin-top: 3px; }
.mini::after { flex: 1; }

/* work area */
.work { flex: 1; min-height: 0; display: flex; }
.side { flex: none; width: 236px; display: flex; flex-direction: column; padding: 1px 0 2px 1px; }
.tabs { display: flex; flex: none; }
.tabs button {
  width: 24px;
  height: 22px;
  padding: 1px;
  border-right: 2px solid #8d8983;
  border-left: 1px solid #eeebe6;
  border-top: 1px solid #eeebe6;
}
.panel {
  flex: 1;
  min-height: 0;
  display: flex;
  flex-direction: column;
  border: 1px solid;
  border-color: #f4f2ee #777 #777 #f4f2ee;
  padding-right: 2px;
}
.options { display: flex; flex: none; height: 19px; margin-bottom: 1px; }
.options button {
  width: 66px;
  display: flex;
  align-items: center;
  justify-content: flex-end;
  gap: 2px;
  padding-right: 5px;
  border: 1px solid;
  border-color: #f4f2ee #666 #666 #f4f2ee;
}
.options .wide { width: 98px; padding-right: 4px; }
.treebox { flex: 1; min-height: 0; display: flex; flex-direction: column; border: 1px solid #555; border-right-color: #999; }
.colhead { flex: none; height: 14px; border-bottom: 1px solid #555; border-right: 1px solid #555; }
.treeview { flex: 1; min-height: 0; display: flex; background: #fff; }

.tree {
  flex: 1;
  min-width: 0;
  overflow: hidden;
  padding: 1px 0 0 3px;
  list-style: none;
  line-height: 1.34;
  background: linear-gradient(#bbb, #bbb) 7px 14px / 1px 100% no-repeat #fefefe;
}
.tree li { display: flex; align-items: center; white-space: nowrap; gap: 3px; }
.tree svg { flex: none; width: 11px; height: 11px; }
.tree b {
  flex: none;
  width: 7px;
  height: 7px;
  margin: 0 3px 0 1px;
  border: 1px solid #999;
  background: linear-gradient(#222, #222) center / 3px 1px no-repeat, linear-gradient(#222, #222) center / 1px 3px no-repeat #fff;
}
.tree .leaf { padding-left: 14px; gap: 2px; position: relative; }
.tree .leaf::before { content: ""; position: absolute; left: 5px; top: 50%; width: 7px; border-top: 1px solid #bbb; }
.tree .root { gap: 4px; margin-left: -2px; }

.splitter {
  flex: none;
  width: 8px;
  position: relative;
  border-right: 2px solid #efece7;
  background: linear-gradient(90deg, #eee 1px, #777 1px 2px, #d5d0c9 2px 4px, #777 4px 5px, #d5d0c9 5px);
}
.splitter button { position: absolute; width: 4px; height: 37px; background: #efede9; display: flex; align-items: center; }
.fold { left: 1px; top: 43%; }
.unfold { left: 4px; top: 50%; }

.viewport { flex: 1; min-width: 0; position: relative; background: linear-gradient(#006cb6, #004a94 50%, #001c5e); }
.viewport svg { width: 100%; height: 100%; stroke: none; }
.viewport p { position: absolute; left: 6px; bottom: 3px; font: 8px "Liberation Sans", Arial, sans-serif; line-height: 10px; color: #6d7c94; }

.rail { flex: none; width: 35px; border-left: 1px solid #efece7; }
.rail.narrow { width: 24px; }
.vgroup {
  display: flex;
  flex-direction: column;
  align-items: center;
  justify-content: space-between;
  padding: 8px 10px 2px 0;
  border-right: 1px solid #8d8983;
  border-bottom: 1px solid #8d8983;
  position: relative;
}
.vgroup::before {
  content: "";
  position: absolute;
  left: 2px;
  right: 2px;
  top: 2px;
  height: 3px;
  border-top: 1px solid #f4f2ee;
  border-bottom: 1px solid #96928c;
}
.vgroup i { position: absolute; left: 24px; top: 7px; }
.narrow .vgroup { padding-right: 0; border-right: 0; }
.v-datum { height: 175px; }
.v-note { height: 51px; }
.v-feat { height: 135px; }
.v-shape { height: 112px; }
.v-edit { height: 92px; }

/* status bar */
.status { flex: none; height: 22px; display: flex; align-items: stretch; border-top: 1px solid #f4f2ee; }
.status .gap { flex: 1; border-right: 1px solid #96928c; margin-right: 71px; }
.filter { width: 166px; margin: 1px 0 2px; display: flex; background: #fff; border: 2px solid; border-color: #666 #ddd #ddd #666; }
.filter select { flex: 1; border: 0; background: #fff; appearance: none; font: inherit; color: inherit; padding: 0 2px; outline: 0; }
.filter .arrow { width: 11px; background: #d5d0c9; border: 1px solid; border-color: #fff #555 #555 #fff; display: flex; align-items: center; justify-content: center; }
.lamp { width: 42px; margin-left: 3px; border-left: 1px solid #96928c; }
.lamp svg { width: 17px; height: 20px; }
```
